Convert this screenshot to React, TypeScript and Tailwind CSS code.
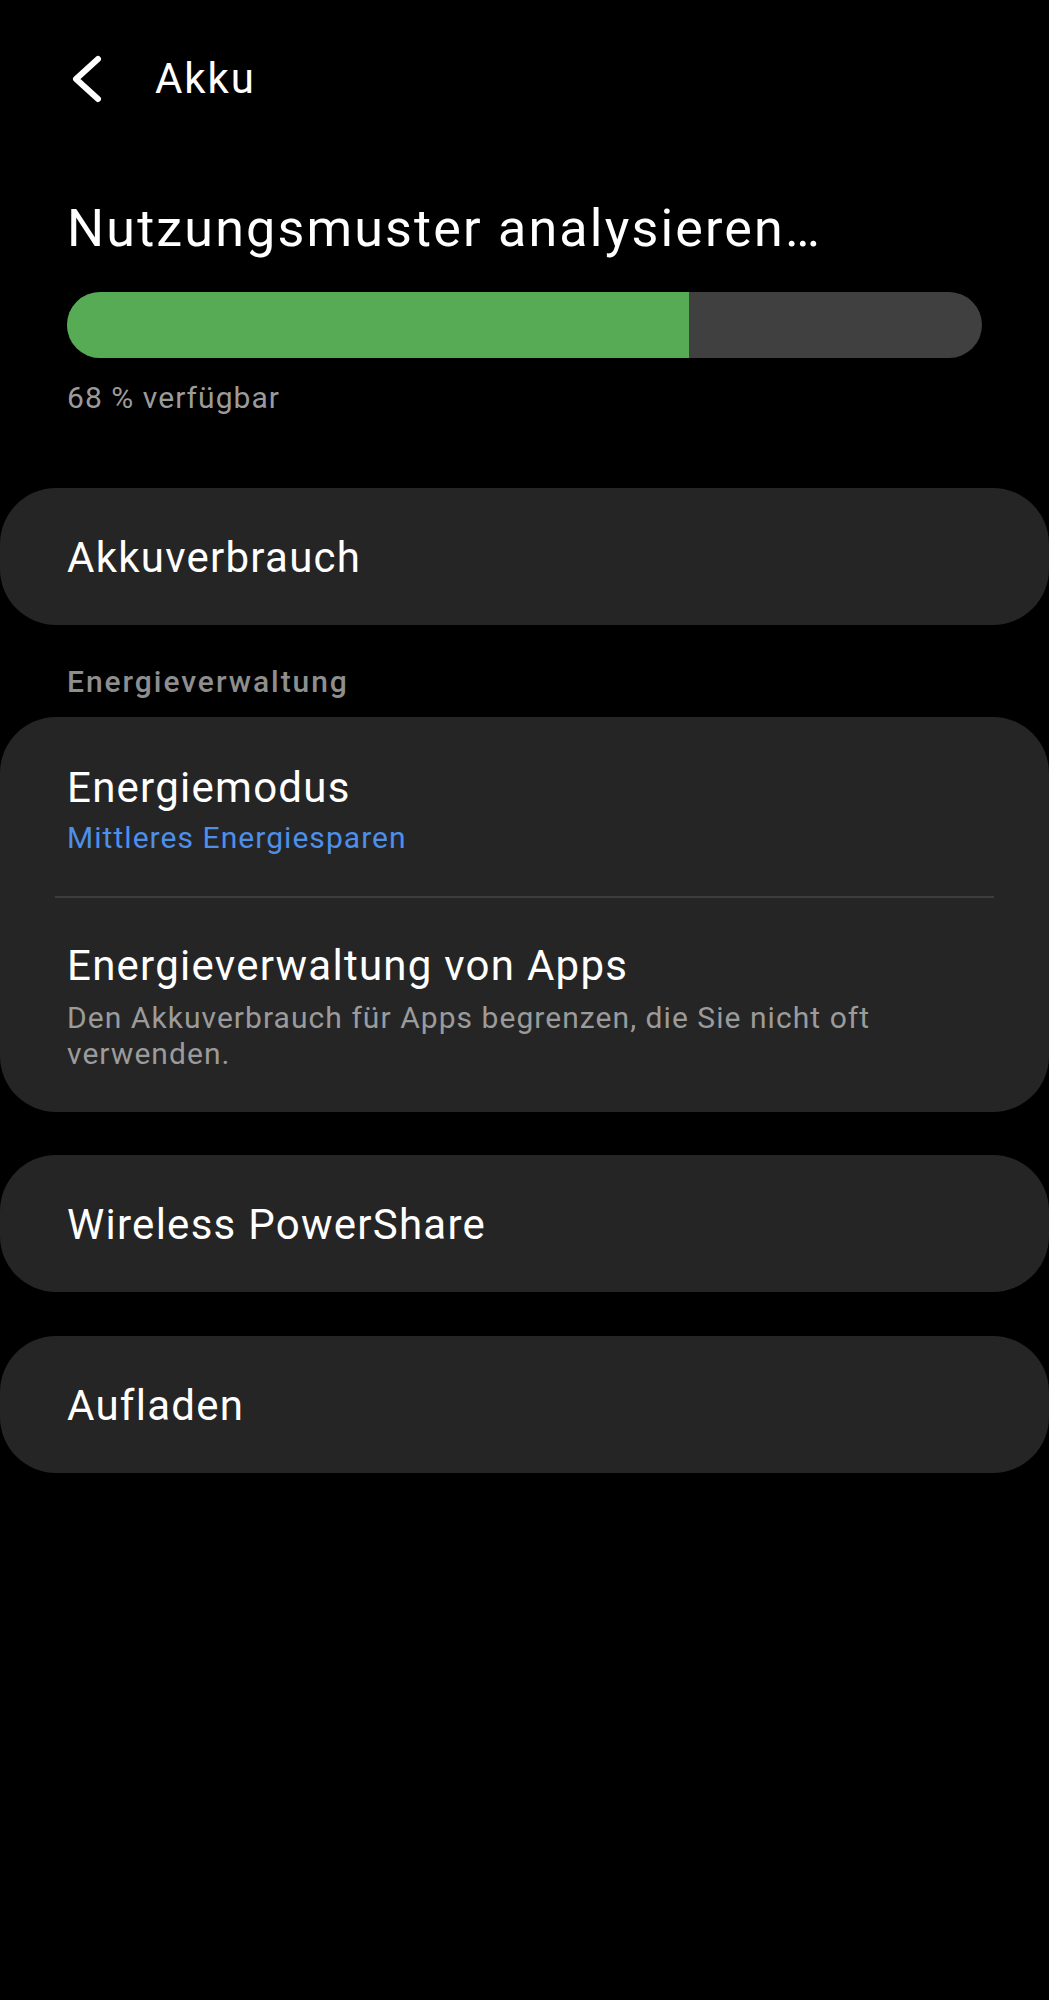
import React from "react";

const font = { fontFamily: "Roboto, 'Noto Sans', sans-serif" };

function BackIcon() {
  return (
    <svg width="32" height="50" viewBox="0 0 32 50" className="ml-[71px]">
      <polyline
        points="27,5 5,25 27,45"
        fill="none"
        stroke="white"
        strokeWidth="6"
        strokeLinecap="round"
        strokeLinejoin="round"
      />
    </svg>
  );
}

function SingleCard({ label }: { label: string }) {
  return (
    <div className="rounded-[56px] bg-[#252525] pl-[67px] pr-[67px] pt-[43px] pb-[40px]">
      <div className="text-[42px] leading-[54px] tracking-[0.03em] text-white">{label}</div>
    </div>
  );
}

export default function App() {
  const level = 68;

  return (
    <div className="min-h-[2000px] w-[1049px] bg-black pt-[52px] text-white" style={font}>
      {/* Top bar */}
      <div className="flex h-[54px] items-center">
        <BackIcon />
        <span className="ml-[52px] text-[42px] leading-[54px] tracking-[0.045em] text-white">Akku</span>
      </div>

      {/* Battery status */}
      <div className="px-[67px]">
        <h1 className="mt-[92px] text-[52px] leading-[62px] font-normal tracking-[0.042em] text-white">
          Nutzungsmuster analysieren…
        </h1>
        <div className="mt-[32px] h-[66px] w-[915px] overflow-hidden rounded-full bg-[#404040]">
          <div className="h-full bg-[#57ab55]" style={{ width: `${(622 / 915) * 100}%` }} />
        </div>
        <div className="mt-[21px] text-[30px] leading-[38px] tracking-[0.035em] text-[#9b9b9b]">
          {level} % verfügbar
        </div>
      </div>

      <div className="mt-[71px]">
        <SingleCard label="Akkuverbrauch" />
      </div>

      <div className="mt-[38px] px-[67px] text-[30px] leading-[38px] font-medium tracking-[0.065em] text-[#8e8e8e]">
        Energieverwaltung
      </div>

      {/* Energy group */}
      <div className="mt-[16px] rounded-[56px] bg-[#252525]">
        <div className="px-[67px] pt-[44px] pb-[39px]">
          <div className="text-[42px] leading-[54px] tracking-[0.03em] text-white">Energiemodus</div>
          <div className="mt-[4px] text-[30px] leading-[38px] tracking-[0.035em] text-[#4d8fe9]">
            Mittleres Energiesparen
          </div>
        </div>
        <div className="mx-[55px] h-[2px] bg-[#3d3d3d]" />
        <div className="px-[67px] pt-[41px] pb-[40px]">
          <div className="text-[42px] leading-[54px] tracking-[0.03em] text-white">Energieverwaltung von Apps</div>
          <p className="mt-[7px] max-w-[880px] text-[30px] leading-[36px] tracking-[0.035em] text-[#9b9b9b]">
            Den Akkuverbrauch für Apps begrenzen, die Sie nicht oft verwenden.
          </p>
        </div>
      </div>

      <div className="mt-[43px]">
        <SingleCard label="Wireless PowerShare" />
      </div>
      <div className="mt-[44px]">
        <SingleCard label="Aufladen" />
      </div>
    </div>
  );
}
